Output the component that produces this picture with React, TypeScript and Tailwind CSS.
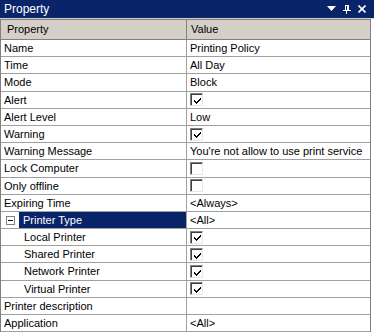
import React from "react";

type Row = {
  name: string;
  value?: string;
  check?: boolean;
  indent?: boolean;
  selected?: boolean;
  group?: boolean;
};

const rows: Row[] = [
  { name: "Name", value: "Printing Policy" },
  { name: "Time", value: "All Day" },
  { name: "Mode", value: "Block" },
  { name: "Alert", check: true },
  { name: "Alert Level", value: "Low" },
  { name: "Warning", check: true },
  { name: "Warning Message", value: "You're not allow to use print service" },
  { name: "Lock Computer", check: false },
  { name: "Only offline", check: false },
  { name: "Expiring Time", value: "<Always>" },
  { name: "Printer Type", value: "<All>", selected: true, group: true },
  { name: "Local Printer", check: true, indent: true },
  { name: "Shared Printer", check: true, indent: true },
  { name: "Network Printer", check: true, indent: true },
  { name: "Virtual Printer", check: true, indent: true },
  { name: "Printer description", value: "" },
  { name: "Application", value: "<All>" },
];

function CheckBox({ checked }: { checked: boolean }) {
  return (
    <div className="w-[13px] h-[13px] border-t border-l border-[#808080] border-r border-b border-r-[#e8e8e8] border-b-[#e8e8e8] bg-white flex items-center justify-center">
      <div className="w-[11px] h-[11px] border-t border-l border-[#404040] border-r-0 border-b-0 flex items-center justify-center">
        {checked && (
          <svg width="9" height="9" viewBox="0 0 9 9" shapeRendering="crispEdges">
            <path d="M1.5 4.5 L3.5 6.5 L7.5 2.5 M1.5 5.5 L3.5 7.5 L7.5 3.5" stroke="#000" strokeWidth="1" fill="none" />
          </svg>
        )}
      </div>
    </div>
  );
}

export default function App() {
  return (
    <div
      className="w-[374px] h-[332px] bg-white overflow-hidden text-[11px] text-black"
      style={{ fontFamily: '"Liberation Sans", Arial, sans-serif' }}
    >
      <div className="h-[18px] bg-[#0a246a] flex items-center justify-between pl-[4px] pr-[8px] text-white text-[12px]">
        <span>Property</span>
        <div className="flex items-center gap-[7px]">
          <svg width="9" height="6" viewBox="0 0 9 6">
            <path d="M0 0 H9 L4.5 5 Z" fill="#fff" />
          </svg>
          <svg width="8" height="9" viewBox="0 0 8 9" shapeRendering="crispEdges">
            <path d="M2 0 H6 V5 H8 V6 H0 V5 H2 Z M3 1 V5 H4 V1 Z" fill="#fff" />
            <rect x="3" y="6" width="1" height="3" fill="#fff" />
          </svg>
          <svg width="8" height="8" viewBox="0 0 8 8">
            <path d="M0.5 0.5 L7.5 7.5 M7.5 0.5 L0.5 7.5" stroke="#fff" strokeWidth="1.6" />
          </svg>
        </div>
      </div>
      <div className="h-[1px] bg-[#d4d0c8]" />
      <div className="w-[371px] border-l border-r border-[#808080]">
        <div className="grid grid-cols-[186px_1fr] h-[21px] bg-[#d4d0c8] border-t border-b border-[#808080]">
          <div className="border-r border-[#808080] flex items-center pl-[6px]">Property</div>
          <div className="flex items-center pl-[4px]">Value</div>
        </div>
        {rows.map((r) => (
          <div key={r.name} className="grid grid-cols-[186px_1fr] h-[17.2px] border-b border-[#a0a0a0]">
            <div className="border-r border-[#a0a0a0] flex items-center">
              {r.group ? (
                <>
                  <div className="w-[18px] flex items-center justify-center shrink-0">
                    <div className="w-[9px] h-[9px] border border-[#808080] bg-white flex items-center justify-center">
                      <div className="w-[5px] h-[1px] bg-black" />
                    </div>
                  </div>
                  <div className="flex-1 h-full bg-[#0a246a] text-white flex items-center pl-[4px]">
                    {r.name}
                  </div>
                </>
              ) : (
                <span className={r.indent ? "pl-[23px]" : "pl-[3px]"}>{r.name}</span>
              )}
            </div>
            <div className="flex items-center pl-[3px]">
              {r.check !== undefined ? <CheckBox checked={r.check} /> : <span>{r.value}</span>}
            </div>
          </div>
        ))}
      </div>
    </div>
  );
}
